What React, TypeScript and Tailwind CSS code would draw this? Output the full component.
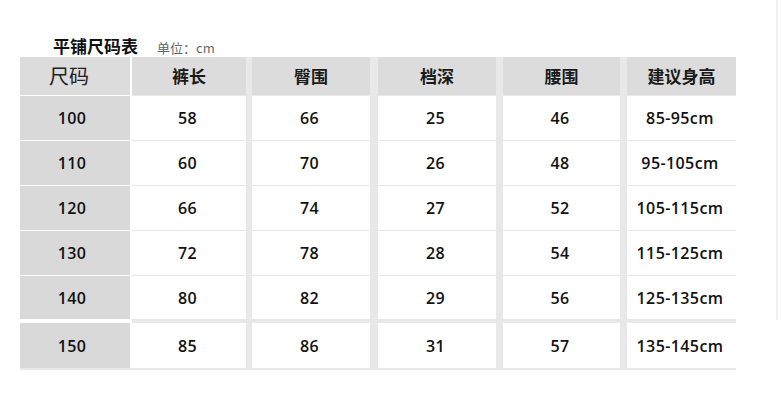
import React from 'react';

type Column = {
  title: string;
  width: string;
  gap: string;
  values: string[];
};

const SIZES = ['100', '110', '120', '130', '140', '150'];

const COLUMNS: Column[] = [
  { title: '裤长', width: 'w-[114px]', gap: '', values: ['58', '60', '66', '72', '80', '85'] },
  { title: '臀围', width: 'w-[118px]', gap: 'ml-[6px]', values: ['66', '70', '74', '78', '82', '86'] },
  { title: '档深', width: 'w-[118px]', gap: 'ml-[8px]', values: ['25', '26', '27', '28', '29', '31'] },
  { title: '腰围', width: 'w-[117px]', gap: 'ml-[7px]', values: ['46', '48', '52', '54', '56', '57'] },
  {
    title: '建议身高',
    width: 'w-[109px]',
    gap: 'ml-[7px]',
    values: ['85-95cm', '95-105cm', '105-115cm', '115-125cm', '125-135cm', '135-145cm'],
  },
];

// row heights; the last row sits a little further down
const ROW_H = ['h-[44px]', 'h-[44px]', 'h-[44px]', 'h-[44px]', 'h-[43px]', 'h-[45px]'];
const ROW_MT = ['mt-[1px]', 'mt-[1px]', 'mt-[1px]', 'mt-[1px]', 'mt-[1px]', 'mt-[4px]'];

const cjk = "font-['Noto_Sans_CJK_SC','Noto_Sans',sans-serif]";
const num = "font-['Open_Sans','Noto_Sans_CJK_SC',sans-serif]";

function SizeColumn() {
  return (
    <div className="flex flex-col w-[110px] bg-white">
      <div className={`h-[38px] bg-[#dcdcdc] flex items-center justify-center pr-[12px] text-[20px] text-[#222] ${cjk}`}>
        尺码
      </div>
      {SIZES.map((s, i) => (
        <div
          key={s}
          className={`${ROW_H[i]} ${ROW_MT[i]} bg-[#d9d9d9] flex items-center justify-center pr-[6px] text-[16px] font-semibold tracking-[0.4px] text-[#111] ${num}`}
        >
          {s}
        </div>
      ))}
    </div>
  );
}

function DataColumn({ col }: { col: Column }) {
  return (
    <div className={`flex flex-col ${col.width} ${col.gap} bg-[#e8e8e8]`}>
      <div className={`h-[38px] bg-[#dcdcdc] flex items-center justify-center text-[17px] font-bold text-[#1a1a1a] ${cjk}`}>
        {col.title}
      </div>
      {col.values.map((v, i) => (
        <div
          key={i}
          className={`${ROW_H[i]} ${ROW_MT[i]} bg-white flex items-center justify-center pr-[3px] text-[16px] font-semibold tracking-[0.4px] text-[#111] ${num}`}
        >
          {v}
        </div>
      ))}
    </div>
  );
}

export default function App() {
  return (
    <div className="w-[781px] h-[414px] bg-white flex">
      <div className="flex-1">
        {/* Title */}
        <div className="flex items-end pl-[53px] pt-[36px] h-[54px]">
          <span className={`text-[17px] font-bold text-[#111] leading-none ${cjk}`}>平铺尺码表</span>
          <span className={`ml-[19px] text-[13px] text-[#666] leading-none ${cjk}`}>单位：cm</span>
        </div>

        {/* Table */}
        <div className="mt-[3px] ml-[20px] flex w-[716px] bg-[#e8e8e8] pb-[2px]">
          <SizeColumn />
          <div className="w-[2px] bg-white" />
          {COLUMNS.map((c) => (
            <DataColumn key={c.title} col={c} />
          ))}
        </div>
      </div>
      <div className="w-[2px] h-[320px] bg-[#f1f1f1] mr-[3px]" />
    </div>
  );
}
